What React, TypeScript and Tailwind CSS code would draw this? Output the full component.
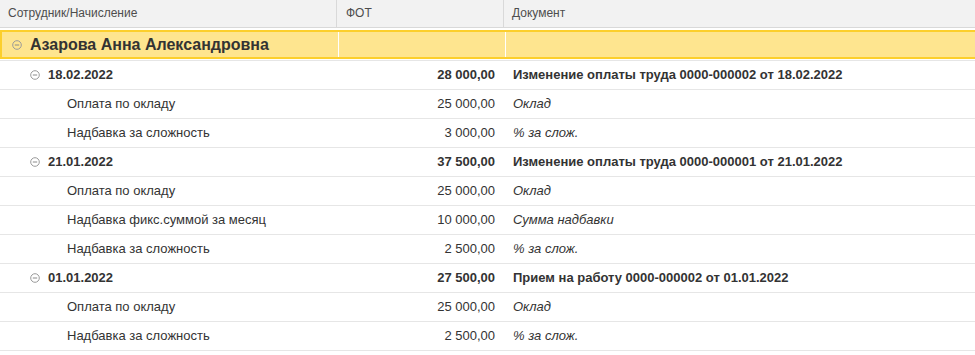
import React from 'react';

type Line = { name: string; sum: string; doc: string };
type Group = { date: string; total: string; doc: string; lines: Line[] };

const groups: Group[] = [
  {
    date: '18.02.2022',
    total: '28 000,00',
    doc: 'Изменение оплаты труда 0000-000002 от 18.02.2022',
    lines: [
      { name: 'Оплата по окладу', sum: '25 000,00', doc: 'Оклад' },
      { name: 'Надбавка за сложность', sum: '3 000,00', doc: '% за слож.' },
    ],
  },
  {
    date: '21.01.2022',
    total: '37 500,00',
    doc: 'Изменение оплаты труда 0000-000001 от 21.01.2022',
    lines: [
      { name: 'Оплата по окладу', sum: '25 000,00', doc: 'Оклад' },
      { name: 'Надбавка фикс.суммой за месяц', sum: '10 000,00', doc: 'Сумма надбавки' },
      { name: 'Надбавка за сложность', sum: '2 500,00', doc: '% за слож.' },
    ],
  },
  {
    date: '01.01.2022',
    total: '27 500,00',
    doc: 'Прием на работу 0000-000002 от 01.01.2022',
    lines: [
      { name: 'Оплата по окладу', sum: '25 000,00', doc: 'Оклад' },
      { name: 'Надбавка за сложность', sum: '2 500,00', doc: '% за слож.' },
    ],
  },
];

// свернуть группу: кружок с минусом
const Collapse = () => (
  <svg width="10" height="10" viewBox="0 0 10 10" className="flex-shrink-0">
    <circle cx="5" cy="5" r="4.3" fill="none" stroke="#9a9a9a" strokeWidth="1" />
    <line x1="2.8" y1="5" x2="7.2" y2="5" stroke="#8a8a8a" strokeWidth="1" />
  </svg>
);

const cols = 'grid grid-cols-[337px_167px_1fr]';

export default function App() {
  return (
    <div className="w-[975px] h-[355px] bg-white overflow-hidden text-[13px] text-[#333] font-['Liberation_Sans',Arial,sans-serif]">
      {/* Header */}
      <div className={`${cols} h-[28px] bg-[#f2f2f2] border-b border-[#d9d9d9] text-[12px] text-[#4d4d4d]`}>
        <div className="flex items-center pl-2 pb-[1px] border-r border-[#d9d9d9]">Сотрудник/Начисление</div>
        <div className="flex items-center pl-[9px] pb-[1px] border-r border-[#d9d9d9]">ФОТ</div>
        <div className="flex items-center pl-2 pb-[1px]">Документ</div>
      </div>

      {/* Employee */}
      <div className={`${cols} mt-[2px] h-[29px] bg-[#fee58f] border-y-2 border-l-2 border-[#fccf2c]`}>
        <div className="flex items-center gap-[8px] pl-[10px] border-r border-white">
          <Collapse />
          <span className="text-[16px] font-bold">Азарова Анна Александровна</span>
        </div>
        <div className="border-r border-white" />
        <div />
      </div>
      <div className="h-[2px] bg-white border-b border-[#e6e6e6]" />

      {groups.map((g) => (
        <React.Fragment key={g.date}>
          <div className={`${cols} h-[29px] border-b border-[#e6e6e6] font-bold`}>
            <div className="flex items-center gap-[8px] pl-[30px]">
              <Collapse />
              <span>{g.date}</span>
            </div>
            <div className="flex items-center justify-end pr-[9px]">{g.total}</div>
            <div className="flex items-center pl-[9px]">{g.doc}</div>
          </div>
          {g.lines.map((l) => (
            <div key={l.name} className={`${cols} h-[29px] border-b border-[#e6e6e6]`}>
              <div className="flex items-center pl-[67px]">{l.name}</div>
              <div className="flex items-center justify-end pr-[9px]">{l.sum}</div>
              <div className="flex items-center pl-[9px] italic">{l.doc}</div>
            </div>
          ))}
        </React.Fragment>
      ))}
    </div>
  );
}
